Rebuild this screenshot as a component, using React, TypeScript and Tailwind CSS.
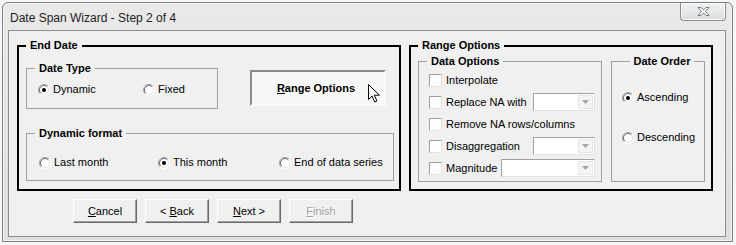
import type { ReactNode } from 'react';

function RadioDot({ on }: { on?: boolean }) {
  return (
    <svg width="12" height="12" viewBox="0 0 12 12" className="shrink-0">
      <circle cx="6" cy="6" r="5.5" fill="#fff" />
      <path d="M2.1 9.9 A5.5 5.5 0 0 1 9.9 2.1" stroke="#a0a0a0" fill="none" />
      <path d="M2.8 9.2 A4.5 4.5 0 0 1 9.2 2.8" stroke="#696969" fill="none" />
      <path d="M9.9 2.1 A5.5 5.5 0 0 1 2.1 9.9" stroke="#ffffff" fill="none" />
      <path d="M9.2 2.8 A4.5 4.5 0 0 1 2.8 9.2" stroke="#e3e3e3" fill="none" />
      {on && <circle cx="6" cy="6" r="2" fill="#000" />}
    </svg>
  );
}

function Radio({ label, on, className = '' }: { label: string; on?: boolean; className?: string }) {
  return (
    <div className={`flex h-[13px] items-center gap-[3px] ${className}`}>
      <RadioDot on={on} />
      <span className="leading-[13px]">{label}</span>
    </div>
  );
}

function Check() {
  return (
    <div className="h-[13px] w-[13px] shrink-0 border border-t-[#a0a0a0] border-l-[#a0a0a0] border-b-[#e3e3e3] border-r-[#e3e3e3] bg-[#fdfdfd]" />
  );
}

function Combo({ w }: { w: string }) {
  return (
    <div className={`flex h-[18px] ${w} border border-t-[#a0a0a0] border-l-[#a0a0a0] border-b-[#e3e3e3] border-r-[#e3e3e3] bg-white p-px`}>
      <div className="flex-1" />
      <div className="flex w-[15px] items-center justify-center border border-[#e6e6e6] bg-[#f4f4f4]">
        <svg width="7" height="4" viewBox="0 0 7 4">
          <path d="M0 0h7L3.5 4z" fill="#a3a3a3" />
        </svg>
      </div>
    </div>
  );
}

function Btn({ children, disabled }: { children: ReactNode; disabled?: boolean }) {
  return (
    <button
      className={`h-[24px] w-[64px] border border-t-white border-l-white border-b-[#696969] border-r-[#696969] bg-[#f0f0f0] text-[11px] shadow-[inset_-1px_-1px_0_#a0a0a0] ${
        disabled ? 'text-[#a0a0a0] [text-shadow:1px_1px_0_#fff]' : 'text-black'
      }`}
    >
      {children}
    </button>
  );
}

function Group({
  title,
  className = '',
  outer,
  center,
  children,
}: {
  title: string;
  className?: string;
  outer?: boolean;
  center?: boolean;
  children: ReactNode;
}) {
  return (
    <fieldset
      className={`${outer ? 'border-2 border-black pl-[7px]' : 'border border-[#a0a0a0] pl-[8px]'} ${className}`}
    >
      <legend className={`px-[4px] text-[11px] font-bold leading-[13px] ${center ? 'mx-auto' : ''}`}>{title}</legend>
      {children}
    </fieldset>
  );
}

function CheckRow({ label, labelW, combo }: { label: string; labelW?: string; combo?: string }) {
  return (
    <div className="ml-[2px] flex h-[22px] items-center gap-[4px]">
      <Check />
      <span className={labelW ?? ''}>{label}</span>
      {combo && <Combo w={combo} />}
    </div>
  );
}

export default function App() {
  return (
    <div className="h-[245px] w-[736px] bg-[#f7f7f7] pl-[2px] pt-[2px] font-['Liberation_Sans',Arial,sans-serif] text-[11px] text-black">
      {/* window frame */}
      <div className="flex h-[240px] w-[731px] flex-col rounded-t-[6px] border border-[#7d7d7d] bg-gradient-to-b from-[#e9e9e9] to-[#dedede] pb-[4px] pl-[5px] pr-[6px] shadow-[inset_0_0_0_1px_#f6f6f6]">
        {/* title bar */}
        <div className="flex h-[27px] items-start">
          <span className="ml-[2px] mt-[8px] text-[12px] leading-[14px] text-[#1e1e1e]">Date Span Wizard - Step 2 of 4</span>
          <div className="ml-auto flex h-[18px] w-[46px] items-center justify-center rounded-b-[4px] border border-t-0 border-[#8c8c8c] bg-gradient-to-b from-[#f2f2f2] to-[#dcdcdc] shadow-[inset_0_0_0_1px_#fafafa]">
            <svg width="13" height="11" viewBox="0 0 13 11">
              <path
                d="M1 1.5h3l2.5 2.5 2.5-2.5h3L8.5 5.5l3.5 4h-3L6.5 7 4 9.5H1l3.5-4z"
                fill="#fff"
                stroke="#5f6a76"
                strokeWidth="0.9"
                strokeLinejoin="round"
              />
            </svg>
          </div>
        </div>

        {/* client area */}
        <div className="flex flex-1 flex-col border border-[#8e8e8e] bg-[#f0f0f0] pl-[8px] pt-[8px]">
          <div className="flex gap-[8px]">
            {/* End Date */}
            <Group title="End Date" outer className="h-[152px] w-[384px]">
              <div className="flex items-start pt-[10px]">
                <Group title="Date Type" className="h-[47px] w-[192px]">
                  <div className="ml-[3px] flex pt-[8px]">
                    <Radio label="Dynamic" on className="w-[105px]" />
                    <Radio label="Fixed" />
                  </div>
                </Group>
                <div className="relative ml-[32px] mt-[8px] flex h-[36px] w-[136px] items-center justify-center border-2 border-t-[#8a8a8a] border-l-[#8a8a8a] border-b-[#fbfbfb] border-r-[#fbfbfb] bg-[#f8f8f8] font-bold">
                  <span className="mr-[4px]">
                    <span className="underline">R</span>ange Options
                  </span>
                  <svg width="14" height="19" viewBox="0 0 14 19" className="absolute left-[116px] top-[12px]">
                    <path d="M0.5 0.5v15l3.6-3.4 2.6 5.9 2.2-1-2.5-5.8h5z" fill="#fff" stroke="#000" strokeLinejoin="round" />
                  </svg>
                </div>
              </div>
              <Group title="Dynamic format" className="mt-[18px] h-[54px] w-[368px]">
                <div className="ml-[4px] flex pt-[16px]">
                  <Radio label="Last month" className="w-[119px]" />
                  <Radio label="This month" on className="w-[121px]" />
                  <Radio label="End of data series" />
                </div>
              </Group>
            </Group>

            {/* Range Options */}
            <Group title="Range Options" outer className="h-[152px] w-[304px]">
              <div className="flex gap-[9px] pt-[3px]">
                <Group title="Data Options" className="h-[127px] w-[184px]">
                  <div className="pt-[1px]">
                    <CheckRow label="Interpolate" />
                    <CheckRow label="Replace NA with" labelW="w-[83px]" combo="w-[62px]" />
                    <CheckRow label="Remove NA rows/columns" />
                    <CheckRow label="Disaggregation" labelW="w-[83px]" combo="w-[62px]" />
                    <CheckRow label="Magnitude" labelW="w-[51px]" combo="w-[94px]" />
                  </div>
                </Group>
                <Group title="Date Order" center className="h-[127px] w-[94px]">
                  <div className="ml-[2px] pt-[23px]">
                    <Radio label="Ascending" on />
                    <Radio label="Descending" className="mt-[27px]" />
                  </div>
                </Group>
              </div>
            </Group>
          </div>

          {/* wizard buttons */}
          <div className="ml-[56px] mt-[8px] flex gap-[8px]">
            <Btn>
              <span className="underline">C</span>ancel
            </Btn>
            <Btn>
              &lt; <span className="underline">B</span>ack
            </Btn>
            <Btn>
              <span className="underline">N</span>ext &gt;
            </Btn>
            <Btn disabled>
              <span className="underline">F</span>inish
            </Btn>
          </div>
        </div>
      </div>
    </div>
  );
}
